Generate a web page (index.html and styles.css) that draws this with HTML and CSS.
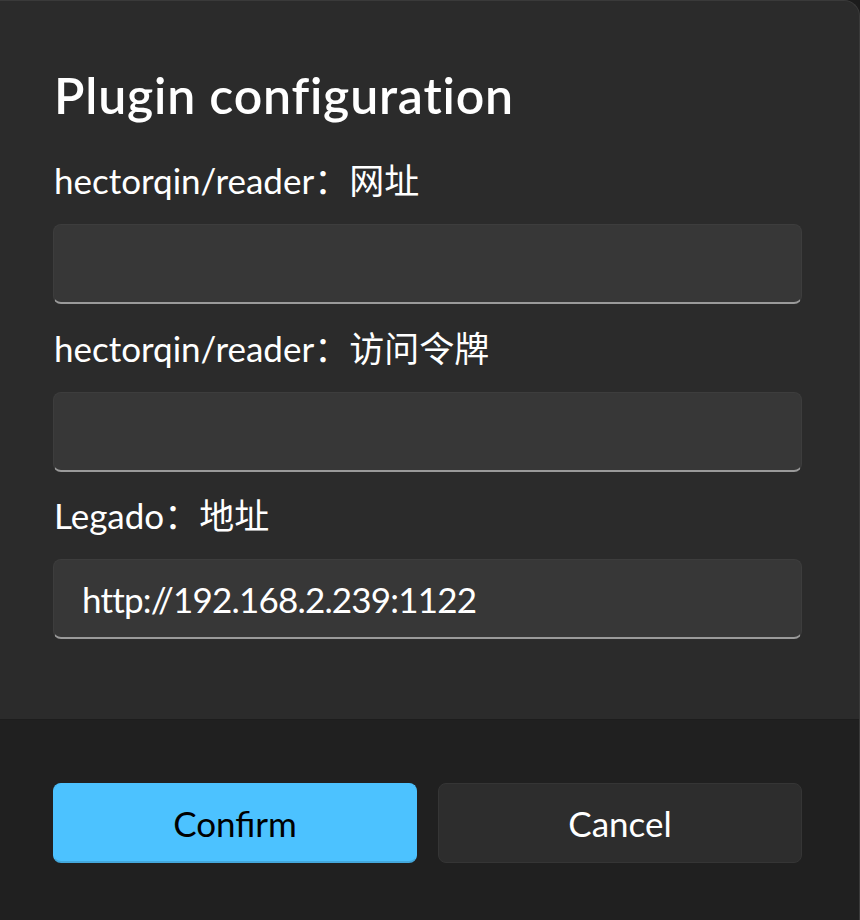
FILE: index.html
```html
<!DOCTYPE html>
<html lang="zh">
<head>
<meta charset="utf-8">
<title>Plugin configuration</title>
<link rel="stylesheet" href="styles.css">
</head>
<body>
<div class="dialog">
  <div class="content">
    <h1 class="title">Plugin configuration</h1>
    <div class="field">
      <label class="label">hectorqin/reader：网址</label>
      <div class="input"></div>
    </div>
    <div class="field">
      <label class="label">hectorqin/reader：访问令牌</label>
      <div class="input"></div>
    </div>
    <div class="field">
      <label class="label">Legado：地址</label>
      <div class="input"><span class="value">http://192.168.2.239:1122</span></div>
    </div>
  </div>
  <div class="footer">
    <button class="btn btn-primary">Confirm</button>
    <button class="btn btn-secondary">Cancel</button>
  </div>
</div>
</body>
</html>
```
FILE: styles.css
```css
html, body {
  margin: 0;
  padding: 0;
  background: #1c1c1c;
}
body {
  width: 860px;
  height: 920px;
  overflow: hidden;
  font-family: "Lato", "Noto Sans CJK SC", sans-serif;
  color: #ffffff;
}
.dialog {
  width: 860px;
  height: 920px;
  box-sizing: border-box;
  border-top: 1px solid #3a3a3a;
  border-right: 1px solid #3a3a3a;
  border-top-right-radius: 16px;
  overflow: hidden;
  display: flex;
  flex-direction: column;
  background: #2b2b2b;
}
.content {
  height: 719px;
  box-sizing: border-box;
  padding: 64px 57px 0 53px;
  display: flex;
  flex-direction: column;
  gap: 22.5px;
  border-bottom: 1px solid #1d1d1d;
}
.title {
  margin: 0 0 11.5px 1px;
  font-size: 50px;
  font-weight: 600;
  line-height: 60px;
  font-variant-ligatures: none;
  letter-spacing: 0.8px;
}
.field {
  display: flex;
  flex-direction: column;
}
.label {
  font-size: 35px;
  line-height: 42px;
  margin: 0 0 23px 1px;
}
.input {
  height: 80px;
  box-sizing: border-box;
  background: #373737;
  border: 1px solid #3d3d3d;
  border-bottom: 2px solid #9a9a9a;
  border-radius: 8px;
  display: flex;
  align-items: center;
  padding: 0 28px;
}
.value {
  font-size: 35px;
  letter-spacing: -0.8px;
  color: #ffffff;
}
.footer {
  flex: 1;
  background: #202020;
  display: flex;
  gap: 21px;
  padding: 63px 57px 0 53px;
  box-sizing: border-box;
}
.btn {
  flex: 1;
  height: 80px;
  border-radius: 8px;
  font-family: inherit;
  font-size: 35px;
  box-sizing: border-box;
}
.btn-primary {
  background: #4cc2ff;
  color: #000000;
  border: 1px solid #4cc2ff;
  border-bottom: 2px solid #44a8dc;
}
.btn-secondary {
  background: #2d2d2d;
  color: #ffffff;
  border: 1px solid #353535;
}
```
